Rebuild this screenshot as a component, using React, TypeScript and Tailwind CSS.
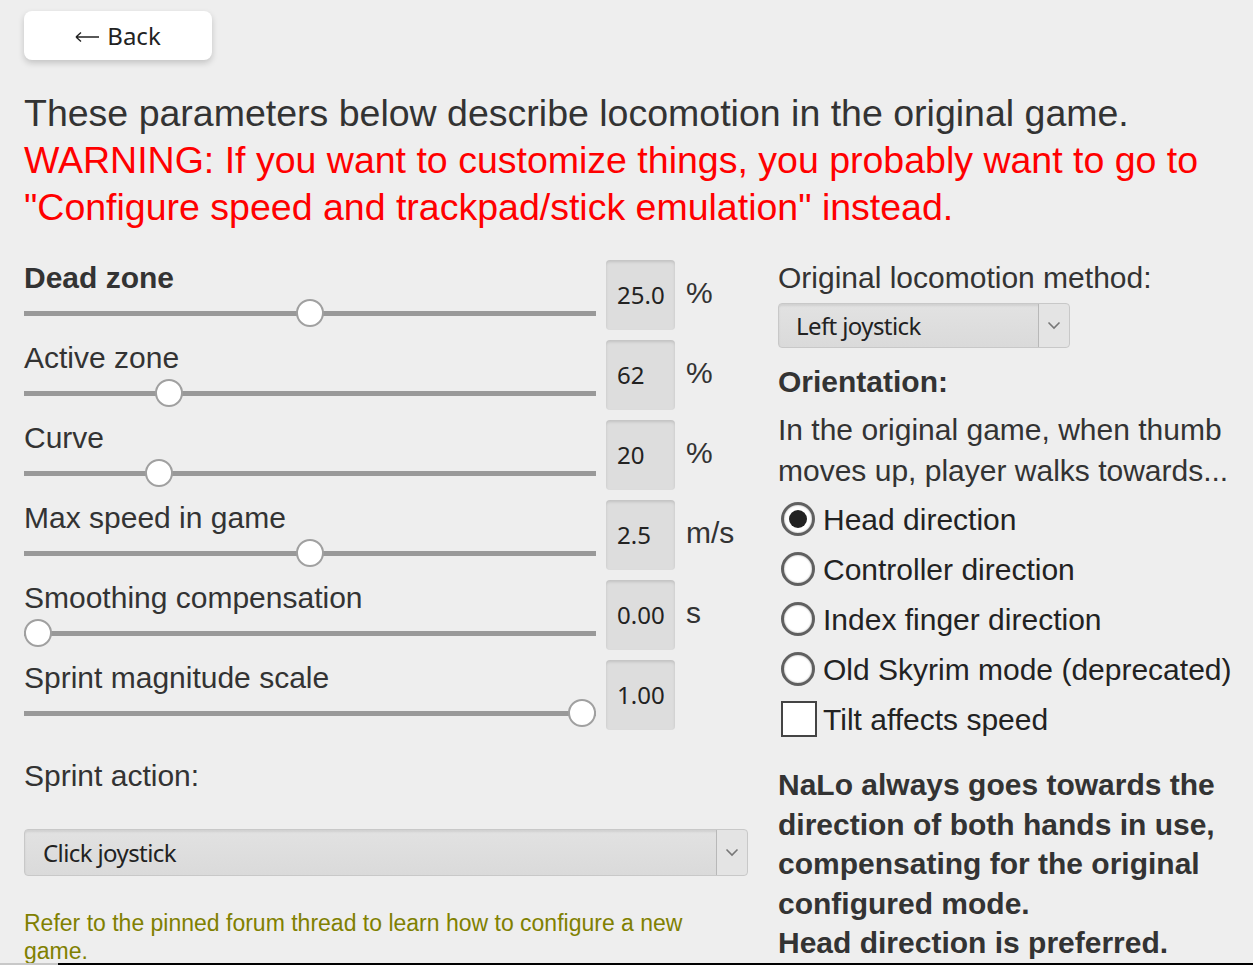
import React from "react";

const sans = { fontFamily: '"Liberation Sans", Arial, sans-serif' };
const ui = { fontFamily: '"Noto Sans", "Open Sans", sans-serif' };

type Row = { label: string; bold?: boolean; value: string; unit: string; frac: number };

const rows: Row[] = [
  { label: "Dead zone", bold: true, value: "25.0", unit: "%", frac: 0.5 },
  { label: "Active zone", value: "62", unit: "%", frac: 0.24 },
  { label: "Curve", value: "20", unit: "%", frac: 0.222 },
  { label: "Max speed in game", value: "2.5", unit: "m/s", frac: 0.5 },
  { label: "Smoothing compensation", value: "0.00", unit: "s", frac: 0 },
  { label: "Sprint magnitude scale", value: "1.00", unit: "", frac: 1 },
];

function Slider({ frac }: { frac: number }) {
  return (
    <div className="relative h-[36px] w-[572px]">
      <div className="absolute left-0 right-0 top-[15px] h-[5px] bg-[#999999]" />
      <div
        className="absolute top-[3px] h-[28px] w-[28px] rounded-full border-2 border-[#a0a0a0] bg-white"
        style={{ left: `${frac * 544}px` }}
      />
    </div>
  );
}

function Chevron() {
  return (
    <svg width="14" height="9" viewBox="0 0 14 9" fill="none">
      <path d="M1.5 1.5 L7 7 L12.5 1.5" stroke="#777" strokeWidth="1.6" />
    </svg>
  );
}

function Select({ text, w, h, px }: { text: string; w: string; h: string; px: string }) {
  return (
    <div
      className={`${w} ${h} flex items-stretch rounded-[4px] border border-[#c8c8c8] bg-gradient-to-b from-[#e2e2e2] to-[#dadada] shadow-[inset_0_2px_2px_rgba(0,0,0,0.08)]`}
    >
      <div className={`flex-1 flex items-center ${px} text-[24px] tracking-[-0.6px] text-[#222]`} style={ui}>
        {text}
      </div>
      <div className="w-[31px] flex items-center justify-center border-l border-[#b8b8b8] bg-[#e4e4e4] rounded-r-[4px]">
        <Chevron />
      </div>
    </div>
  );
}

function Radio({ checked, label }: { checked?: boolean; label: string }) {
  return (
    <div className="h-[50px] flex items-center">
      <div className="ml-[3px] w-[34px] h-[34px] rounded-full border-[3px] border-[#606060] bg-white flex items-center justify-center shadow-[inset_0_0_2px_rgba(0,0,0,0.4)]">
        {checked && <div className="w-[18px] h-[18px] rounded-full bg-[#222]" />}
      </div>
      <span className="ml-[8px] text-[30px] text-[#222]" style={sans}>
        {label}
      </span>
    </div>
  );
}

export default function App() {
  return (
    <div className="h-[965px] w-[1253px] bg-[#eeeeee] flex flex-col overflow-hidden text-[#333]" style={sans}>
      <div className="flex-1 overflow-hidden pl-[24px] pt-[11px]">
        <div
          className="w-[188px] h-[49px] rounded-[8px] bg-white shadow-[0_3px_6px_rgba(0,0,0,0.18)] flex items-center justify-center text-[24px] text-[#222]"
          style={ui}
        >
          <svg width="25" height="12" viewBox="0 0 25 12" fill="none" className="mt-[3px]">
            <path d="M1 6 H24 M1 6 L6 1.5 M1 6 L6 10.5" stroke="#222" strokeWidth="1.4" />
          </svg>
          <span className="ml-[7px]">Back</span>
        </div>

        <div className="mt-[30px] text-[37.5px] leading-[47px] pr-[20px]">
          <div>These parameters below describe locomotion in the original game.</div>
          <div className="text-[#ff0000]">
            WARNING: If you want to customize things, you probably want to go to "Configure speed and trackpad/stick
            emulation" instead.
          </div>
        </div>

        <div className="mt-[29px] flex gap-[30px]">
          {/* left column */}
          <div className="w-[724px]">
            {rows.map((r) => (
              <div key={r.label} className="h-[80px] flex items-start">
                <div className="w-[572px]">
                  <div className={`text-[30px] leading-[36px] ${r.bold ? "font-bold" : ""}`}>{r.label}</div>
                  <Slider frac={r.frac} />
                </div>
                <div
                  className="ml-[10px] w-[69px] h-[70px] rounded-[4px] bg-[#dddddd] shadow-[inset_0_2px_3px_rgba(0,0,0,0.12)] flex items-center pl-[11px] text-[24px] text-[#222]"
                  style={ui}
                >
                  {r.value}
                </div>
                <div className="ml-[11px] mt-[15px] text-[30px] leading-[36px]">{r.unit}</div>
              </div>
            ))}
            <div className="mt-[18px] text-[30px] leading-[36px]">Sprint action:</div>
            <div className="mt-[35px]">
              <Select text="Click joystick" w="w-[724px]" h="h-[47px]" px="pl-[18px]" />
            </div>
            <div className="mt-[33px] text-[23px] leading-[28px] text-[#808000] w-[690px]">
              Refer to the pinned forum thread to learn how to configure a new game.
            </div>
          </div>

          {/* right column */}
          <div className="w-[475px]">
            <div className="text-[30px] leading-[36px]">Original locomotion method:</div>
            <div className="mt-[7px]">
              <Select text="Left joystick" w="w-[292px]" h="h-[45px]" px="pl-[17px]" />
            </div>
            <div className="mt-[16px] text-[30px] leading-[36px] font-bold">Orientation:</div>
            <div className="mt-[9px] text-[30px] leading-[41px]">
              In the original game, when thumb moves up, player walks towards...
            </div>
            <div className="mt-[3px]">
              <Radio checked label="Head direction" />
              <Radio label="Controller direction" />
              <Radio label="Index finger direction" />
              <Radio label="Old Skyrim mode (deprecated)" />
              <div className="h-[50px] flex items-center">
                <div className="ml-[3px] w-[36px] h-[36px] border-2 border-[#444] bg-white" />
                <span className="ml-[6px] text-[30px] text-[#222]">Tilt affects speed</span>
              </div>
            </div>
            <div className="mt-[21px] text-[30px] leading-[39.5px] font-bold pr-[20px]">
              NaLo always goes towards the direction of both hands in use, compensating for the original configured
              mode.
              <br />
              Head direction is preferred.
            </div>
          </div>
        </div>
      </div>
      <div className="h-[2px] flex">
        <div className="w-[58px] bg-[#c8c8c8]" />
        <div className="flex-1 bg-black" />
      </div>
    </div>
  );
}
